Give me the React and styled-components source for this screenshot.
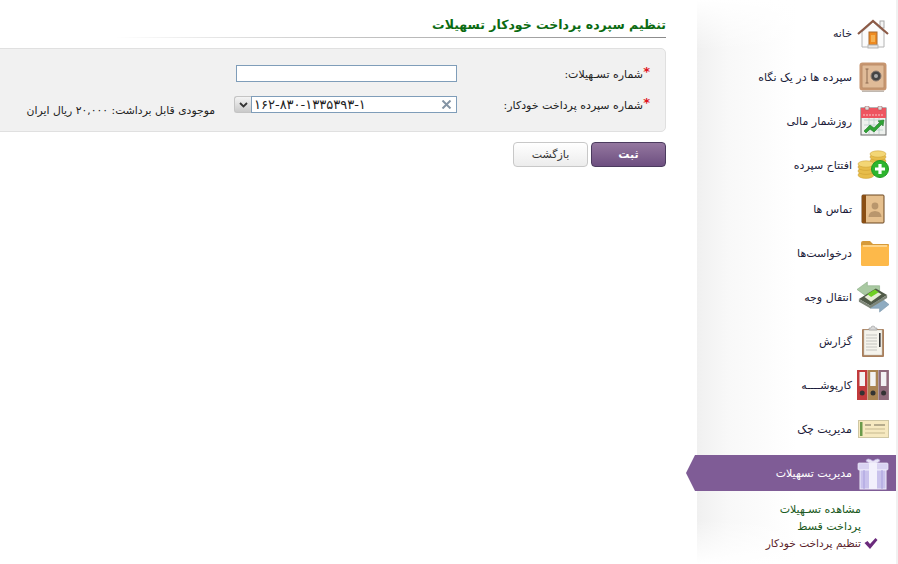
import React from 'react'
import styled, { createGlobalStyle } from 'styled-components'

const GlobalStyle = createGlobalStyle`
  html, body {
    margin: 0;
    padding: 0;
    background: #fff;
    overflow: hidden;
  }
  body {
    font-family: "DejaVu Sans", sans-serif;
  }
`

const Page = styled.div`
  direction: rtl;
  width: 898px;
  height: 564px;
  overflow: hidden;
  display: flex;
  flex-direction: row;
  align-items: stretch;
`

const Sidebar = styled.nav`
  flex: 0 0 212px;
  height: 564px;
  box-sizing: border-box;
  padding: 11px 2px 0 0;
  position: relative;
  &::before {
    content: '';
    position: absolute;
    top: 0;
    bottom: 0;
    left: 11px;
    right: 2px;
    background:
      linear-gradient(to bottom, #fff 0, rgba(255, 255, 255, 0) 50px, rgba(255, 255, 255, 0) 520px, #fff 564px),
      linear-gradient(to right, #f0f0f0 0, #f8f8f8 30px, #fff 100px);
  }
  &::after {
    content: '';
    position: absolute;
    top: 0;
    bottom: 0;
    right: 0;
    width: 2px;
    background: #f1f1f1;
  }
`

const MenuList = styled.ul`
  position: relative;
  z-index: 1;
  list-style: none;
  margin: 0;
  padding: 0;
`

const MenuRow = styled.li`
  height: 44px;
  display: flex;
  align-items: center;
  box-sizing: border-box;
  padding-right: 7px;
  gap: 5px;
  font-size: 11px;
  color: ${(p) => (p.$active ? '#fff' : '#1c1c3a')};
  position: relative;
  ${(p) =>
    p.$active &&
    `
    &::before {
      content: '';
      position: absolute;
      top: 4px;
      bottom: 4px;
      left: 0;
      right: 0;
      background: #7f5c96;
      clip-path: polygon(0 50%, 9px 0, 100% 0, 100% 100%, 9px 100%);
    }
  `}
`

const IconBox = styled.span`
  position: relative;
  width: 32px;
  height: 36px;
  flex: 0 0 32px;
  display: flex;
  align-items: center;
  justify-content: center;
`

const MenuLabel = styled.span`
  position: relative;
  white-space: nowrap;
  line-height: 16px;
  padding-top: 1px;
`

const SubList = styled.ul`
  position: relative;
  z-index: 1;
  list-style: none;
  margin: 6px 0 0;
  padding: 0 35px 0 0;
`

const SubRow = styled.li`
  height: 17px;
  line-height: 17px;
  font-size: ${(p) => (p.$current ? '10.6px' : '11px')};
  color: ${(p) => (p.$current ? '#5b1f2c' : '#1a5a22')};
  white-space: nowrap;
  display: flex;
  align-items: center;
  gap: 2px;
`

const CheckIcon = styled.svg`
  width: 16px;
  height: 13px;
  margin-right: -18px;
  flex: 0 0 16px;
`

const Content = styled.main`
  flex: 0 0 686px;
  box-sizing: border-box;
  padding: 15px 20px 0 0;
  display: flex;
  flex-direction: column;
`

const TitleBar = styled.div`
  height: 23px;
  box-sizing: border-box;
  border-bottom: 1px solid;
  border-image: linear-gradient(to left, #8a8a8a 0, #c8c8c8 60%, #fff 100%) 1;
  width: 550px;
  font-size: 12.5px;
  font-weight: bold;
  line-height: 19px;
  color: #0b6b12;
  white-space: nowrap;
`

const Panel = styled.section`
  margin: 10px 0 0 -14px;
  height: 84px;
  box-sizing: border-box;
  background: #f1f1f1;
  border: 1px solid #e0e0e0;
  border-radius: 5px;
  padding: 16px 15px 0 0;
  display: flex;
  flex-direction: column;
  gap: 14px;
`

const FormRow = styled.div`
  height: 17px;
  display: flex;
  align-items: center;
  font-size: 11px;
  color: #222;
  position: relative;
`

const Required = styled.span`
  color: #e0141c;
  font-weight: bold;
  font-size: 13px;
  flex: 0 0 7px;
  align-self: flex-start;
  line-height: 13px;
`

const FieldLabel = styled.label`
  flex: 0 0 186px;
  white-space: nowrap;
  line-height: 17px;
  padding-top: 2px;
`

const TextField = styled.input`
  width: 221px;
  height: 17px;
  box-sizing: border-box;
  padding: 0;
  margin: 0;
  background: #fff;
  border: 1px solid #7f9db9;
  outline: none;
`

const Combo = styled.div`
  display: flex;
  height: 17px;
  align-items: stretch;
`

const ComboInput = styled.div`
  width: 206px;
  height: 17px;
  box-sizing: border-box;
  padding-left: 2px;
  background: #fff;
  border: 1px solid #7f9db9;
  position: relative;
  direction: ltr;
  text-align: left;
  font-size: 13px;
  line-height: 15px;
  color: #222;
  white-space: nowrap;
`

const ClearMark = styled.svg`
  position: absolute;
  right: 4px;
  top: 3px;
  width: 11px;
  height: 9px;
`

const ComboToggle = styled.div`
  width: 17px;
  height: 17px;
  box-sizing: border-box;
  background: linear-gradient(to bottom, #f4f4f4, #c9c9c9);
  border: 1px solid #c4c4c4;
  border-right: none;
  border-radius: 3px 0 0 3px;
  display: flex;
  align-items: center;
  justify-content: center;
`

const Balance = styled.span`
  margin-right: 19px;
  white-space: nowrap;
  font-size: 10.8px;
  color: #222;
  padding-top: 12px;
`

const Actions = styled.div`
  margin-top: 10px;
  display: flex;
  gap: 3px;
`

const SubmitButton = styled.button`
  width: 75px;
  height: 25px;
  padding: 0;
  font-family: inherit;
  font-size: 11px;
  font-weight: bold;
  color: #fff;
  border: 1px solid #4b3b5e;
  border-radius: 4px;
  background: linear-gradient(to bottom, #94779f, #6d4f80);
`

const BackButton = styled.button`
  width: 75px;
  height: 25px;
  padding: 0;
  font-family: inherit;
  font-size: 11px;
  color: #333;
  border: 1px solid #c8c8c8;
  border-radius: 4px;
  background: linear-gradient(to bottom, #fff, #ececec);
`

const HomeIcon = () => (
  <svg width="32" height="32" viewBox="0 -2 32 32">
    <path d="M5 13 L16 3 L27 13 V28 H5Z" fill="#fbfbfb" stroke="#b4b4b4" />
    <rect x="23" y="2" width="4" height="7" fill="#f4f4f4" stroke="#a8a8a8" />
    <path d="M1 15 L16 2 L31 15" fill="none" stroke="#8c5a46" strokeWidth="2.2" />
    <rect x="12" y="13" width="8" height="13" fill="#ee8a20" stroke="#a86a30" />
    <rect x="14" y="16" width="4" height="7" fill="#f5b050" />
    <rect x="11" y="26" width="10" height="3" fill="#e8e8e8" stroke="#b5b5b5" />
  </svg>
)

const SafeIcon = () => (
  <svg width="28" height="30" viewBox="0 0 28 30">
    <rect x="0.5" y="0.5" width="27" height="28" rx="3" fill="#c79670" />
    <rect x="3" y="3" width="22" height="23" rx="1" fill="#e0bb98" stroke="#bd8f6a" />
    <path d="M8 7 V21 M6.5 7 H9.5 M6.5 21 H9.5" stroke="#8c6a50" strokeWidth="1" />
    <circle cx="17" cy="14" r="5" fill="#444" stroke="#8a7a70" />
    <circle cx="17" cy="14" r="2" fill="#aaa" />
    <rect x="3" y="28.5" width="22" height="1.5" fill="#c0b8b0" />
  </svg>
)

const CalendarIcon = () => (
  <svg width="27" height="30" viewBox="0 0 27 30">
    <rect x="1" y="2" width="25" height="27" fill="#eef1ee" stroke="#666" />
    <rect x="1" y="2" width="25" height="10" fill="#ee5560" />
    <path d="M3 9 H24" stroke="#f8c8c8" strokeDasharray="2 1" />
    <rect x="5" y="0" width="4" height="4" rx="1" fill="#ddd" stroke="#a55" strokeWidth="0.6" />
    <rect x="18" y="0" width="4" height="4" rx="1" fill="#ddd" stroke="#a55" strokeWidth="0.6" />
    <path d="M4 14 H23 M4 19 H23 M4 24 H23 M9 12 V28 M14 12 V28 M19 12 V28" stroke="#b9cfc9" strokeWidth="0.8" />
    <path d="M4 25 L10 19 L14 22 L20 16 L18 15 L24 14 L23 20 L22 18 L14 26 L10 23 L6 27Z" fill="#2fa334" stroke="#1f7a26" strokeWidth="0.6" />
  </svg>
)

const CoinsIcon = () => (
  <svg width="32" height="30" viewBox="0 0 32 30">
    <g fill="#e7bd4a" stroke="#c99a2e" strokeWidth="0.5">
      <ellipse cx="21" cy="15" rx="8" ry="3.4" />
      <ellipse cx="21" cy="11" rx="8" ry="3.4" />
      <ellipse cx="21" cy="7" rx="8" ry="3.4" />
      <ellipse cx="21" cy="4" rx="8" ry="3.2" fill="#f3d675" />
      <ellipse cx="9" cy="25" rx="8" ry="3.4" />
      <ellipse cx="9" cy="21" rx="8" ry="3.4" />
      <ellipse cx="9" cy="17" rx="8" ry="3.4" />
      <ellipse cx="9" cy="14" rx="8" ry="3.2" fill="#f3d675" />
    </g>
    <circle cx="23" cy="19" r="8.5" fill="#2db52d" stroke="#1f9a22" />
    <path d="M23 14 V24 M18 19 H28" stroke="#fff" strokeWidth="3.2" />
  </svg>
)

const ContactsIcon = () => (
  <svg width="24" height="30" viewBox="0 0 24 30">
    <rect x="1" y="1" width="22" height="28" rx="1" fill="#e6c08e" stroke="#6a4620" />
    <rect x="1" y="1" width="4" height="28" fill="#8a4f14" />
    <circle cx="14" cy="12" r="3.4" fill="#b9966c" />
    <path d="M7.5 23 C8 18 11 17.5 14 17 C17 17.5 20 18 20.5 23Z" fill="#b9966c" />
  </svg>
)

const FolderIcon = () => (
  <svg width="32" height="27" viewBox="-3 0 32 27">
    <path d="M1 3 Q1 1 3 1 H10 L13 4 H28 Q29 4 29 5 V9 H1Z" fill="#d69a3a" />
    <rect x="1" y="5" width="28" height="21" rx="1.5" fill="#fdb94a" />
    <path d="M3 6 H27" stroke="#fff1cc" strokeWidth="1" />
  </svg>
)

const TransferIcon = () => (
  <svg width="34" height="34" viewBox="0 0 34 34">
    <path d="M0 9 L11 1 V5 H24 V13 H11 V17Z" fill="#a9c9a2" stroke="#83a87d" strokeWidth="0.6" />
    <path d="M34 25 L24 33 V29 H14 V21 H24 V17Z" fill="#8eabc0" stroke="#7593a8" strokeWidth="0.6" />
    <path d="M2 19 L20 8 L32 15 L14 26Z" fill="#505a48" />
    <path d="M2 19 V22 L14 29 L32 18 V15 L14 26Z" fill="#7e8678" />
    <path d="M8 17 L19 10 L26 14 L15 22Z" fill="#e6ecd6" />
    <path d="M11 14 L19 9 L23 12 L15 17Z" fill="#6fd024" />
  </svg>
)

const ClipboardIcon = () => (
  <svg width="24" height="33" viewBox="0 0 24 33">
    <rect x="1" y="4" width="22" height="28" rx="1" fill="#a97e5b" />
    <rect x="3" y="5" width="18" height="25" fill="#f5f3ec" stroke="#c4c0b4" strokeWidth="0.5" />
    <path d="M5 10 H16 M5 13 H16 M5 16 H16 M5 19 H16 M5 22 H16 M5 25 H16" stroke="#c5c5c0" strokeWidth="1" />
    <rect x="18" y="8" width="1.6" height="14" fill="#333" />
    <path d="M8 5 V3 H10 A2 2 0 0 1 14 3 H16 V5Z" fill="#d8d8d8" stroke="#999" strokeWidth="0.6" />
  </svg>
)

const BindersIcon = () => (
  <svg width="32" height="32" viewBox="0 0 32 32">
    <rect x="0" y="1" width="10.5" height="30" fill="#c13a3c" />
    <rect x="10.7" y="1" width="10.5" height="30" fill="#a98452" />
    <rect x="21.4" y="1" width="10.5" height="30" fill="#8e6a7a" />
    <rect x="2.5" y="3" width="5.5" height="14" fill="#f3f3f3" />
    <rect x="13.2" y="3" width="5.5" height="14" fill="#f3f3f3" />
    <rect x="23.9" y="3" width="5.5" height="14" fill="#f3f3f3" />
    <circle cx="5.2" cy="24" r="2.5" fill="#333" />
    <circle cx="16" cy="24" r="2.5" fill="#333" />
    <circle cx="26.6" cy="24" r="2.5" fill="#333" />
  </svg>
)

const ChequeIcon = () => (
  <svg width="31" height="18" viewBox="0 0 31 18">
    <rect x="0.5" y="0.5" width="30" height="17" fill="#f6e9c0" stroke="#cfc7a4" />
    <rect x="2" y="2" width="2.5" height="14" fill="#6a9a4a" />
    <path d="M7 5 H13 M16 5 H27" stroke="#77705a" strokeWidth="1.2" />
    <path d="M7 9 H27 M7 13 H27" stroke="#c6b98f" strokeWidth="1" />
  </svg>
)

const GiftIcon = () => (
  <svg width="32" height="34" viewBox="0 0 32 34">
    <path d="M9 5 Q10 1 16 5 Q22 1 23 5 L18 8 H14Z" fill="#e9e4f6" stroke="#b9aee0" strokeWidth="0.7" />
    <rect x="1" y="7" width="30" height="7" rx="1" fill="#d9d3f2" stroke="#efecfb" strokeWidth="0.7" />
    <rect x="3" y="14" width="26" height="19" fill="#c9c2ec" stroke="#efedfb" strokeWidth="1" />
    <rect x="12" y="7" width="8" height="26" fill="#f2f0fc" />
    <path d="M7 14 V33 M25 14 V33" stroke="#a9a0de" strokeWidth="1" />
  </svg>
)

const menuItems = [
  { label: 'خانه', Icon: HomeIcon },
  { label: 'سپرده ها در یک نگاه', Icon: SafeIcon },
  { label: 'روزشمار مالی', Icon: CalendarIcon },
  { label: 'افتتاح سپرده', Icon: CoinsIcon },
  { label: 'تماس ها', Icon: ContactsIcon },
  { label: 'درخواست‌ها', Icon: FolderIcon },
  { label: 'انتقال وجه', Icon: TransferIcon },
  { label: 'گزارش', Icon: ClipboardIcon },
  { label: 'کارپوشــــه', Icon: BindersIcon },
  { label: 'مدیریت چک', Icon: ChequeIcon },
  { label: 'مدیریت تسهیلات', Icon: GiftIcon, active: true },
]

const subItems = [
  { label: 'مشاهده تسـهیلات' },
  { label: 'پرداخت قسط' },
  { label: 'تنظیم پرداخت خودکار', current: true },
]

const App = () => {
  return (
    <Page>
      <GlobalStyle />
      <Sidebar>
        <MenuList>
          {menuItems.map(({ label, Icon, active }) => (
            <MenuRow key={label} $active={active}>
              <IconBox>
                <Icon />
              </IconBox>
              <MenuLabel>{label}</MenuLabel>
            </MenuRow>
          ))}
        </MenuList>
        <SubList>
          {subItems.map((item) => (
            <SubRow key={item.label} $current={item.current}>
              {item.current && (
                <CheckIcon viewBox="0 0 15 13">
                  <path d="M1 6 L4 4 L6.5 7 L12 1 L14 3 L6.5 12Z" fill="#6b2a7c" />
                </CheckIcon>
              )}
              <span>{item.label}</span>
            </SubRow>
          ))}
        </SubList>
      </Sidebar>
      <Content>
        <TitleBar>تنظیم سپرده پرداخت خودکار تسهیلات</TitleBar>
        <Panel>
          <FormRow>
            <Required>*</Required>
            <FieldLabel>شماره تسـهیلات:</FieldLabel>
            <TextField />
          </FormRow>
          <FormRow>
            <Required>*</Required>
            <FieldLabel>شماره سپرده پرداخت خودکار:</FieldLabel>
            <Combo>
              <ComboInput>
                ۱۶۲-۸۳۰-۱۳۳۵۳۹۳-۱
                <ClearMark viewBox="0 0 11 9">
                  <path d="M1.5 0.5 L9.5 8.5 M9.5 0.5 L1.5 8.5" stroke="#8494a4" strokeWidth="2" />
                </ClearMark>
              </ComboInput>
              <ComboToggle>
                <svg width="9" height="6" viewBox="0 0 9 6">
                  <path d="M1 1 L4.5 4.5 L8 1" fill="none" stroke="#333" strokeWidth="1.8" />
                </svg>
              </ComboToggle>
            </Combo>
            <Balance>موجودی قابل برداشت: ۲۰,۰۰۰ ریال ایران</Balance>
          </FormRow>
        </Panel>
        <Actions>
          <SubmitButton>ثبت</SubmitButton>
          <BackButton>بازگشت</BackButton>
        </Actions>
      </Content>
    </Page>
  )
}

export default App
